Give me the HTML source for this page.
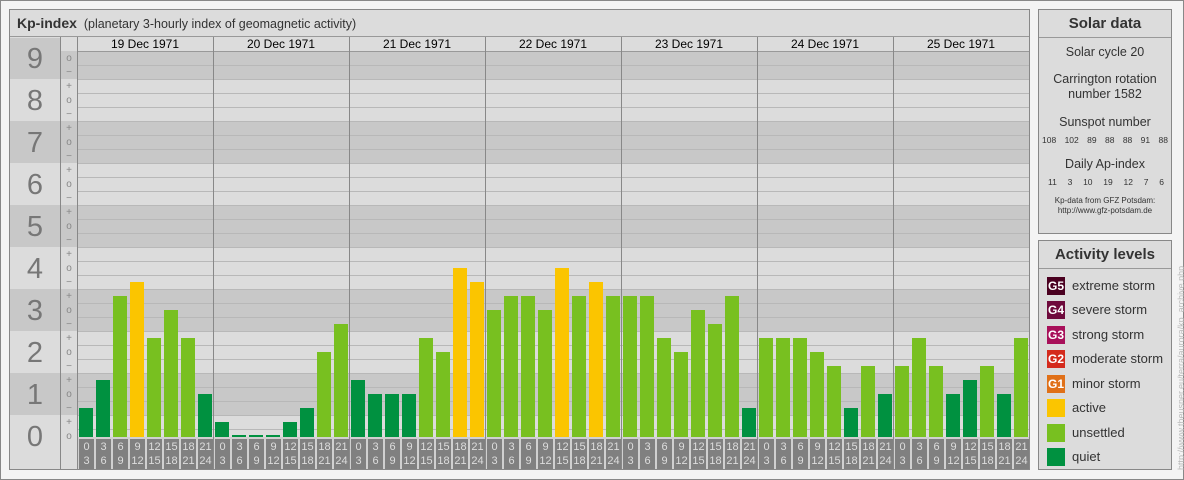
<!DOCTYPE html><html><head><meta charset="utf-8"><style>
*{margin:0;padding:0;box-sizing:border-box}
body{width:1184px;height:480px;background:#fff;font-family:"Liberation Sans",sans-serif;position:relative;overflow:hidden}
.a{position:absolute}
#frame{left:0;top:0;width:1184px;height:480px;border:1px solid #888;background:#f4f4f4}
#main{left:9px;top:9px;width:1021px;height:461px;border:1px solid #888;background:#dcdcdc}
.band{position:absolute;left:10px;width:1019px;height:42px}
.d{background:#c8c8c8}.l{background:#dcdcdc}
.gl{position:absolute;left:77px;width:952px;height:1px;background:#b8b8b8}
.num{position:absolute;left:10px;width:50px;height:42px;text-align:center;font-size:29px;color:#777;line-height:42px}
.sg{position:absolute;left:61px;width:16px;font-size:10px;color:#888;text-align:center;line-height:14px;height:14px}
.vl{position:absolute;top:37px;width:1px;height:432px;background:#888}
.dh{position:absolute;top:37px;width:136px;height:14px;font-size:12px;text-align:center;line-height:14px;color:#000}
.b{position:absolute;width:14px}
.q{background:#009140}.u{background:#78c020}.y{background:#fbc500}
.hl{position:absolute;top:439px;width:15px;height:30px;background:#808080;color:#ddd;font-size:11px;text-align:center;line-height:14px;padding-top:1px}
.box{position:absolute;left:1038px;width:134px;border:1px solid #888;background:#dcdcdc}
.bt{height:28px;border-bottom:1px solid #999;text-align:center;font-weight:bold;font-size:15px;line-height:28px;color:#333}
.st{text-align:center;color:#333;font-size:12.5px}
.row{display:flex;justify-content:space-between;font-size:8.5px;color:#333;padding:0 3px;white-space:nowrap}
.lg{position:absolute;left:8px;width:18px;height:18px;color:#fff;font-size:12px;font-weight:bold;line-height:18px;text-align:center}
.lt{position:absolute;left:33px;font-size:13px;color:#333;line-height:18px}
</style></head><body>
<div class="a" id="frame"></div>
<div class="a" id="main"></div>
<div class="a" style="left:10px;top:10px;width:1019px;height:27px;border-bottom:1px solid #999;font-size:12.5px;line-height:26px;color:#333;padding-left:7px"><b style="font-size:14px">Kp-index</b>&nbsp;&nbsp;(planetary 3-hourly index of geomagnetic activity)</div>
<div class="band d" style="top:38px;height:41px"></div>
<div class="band l" style="top:79px"></div>
<div class="band d" style="top:121px"></div>
<div class="band l" style="top:163px"></div>
<div class="band d" style="top:205px"></div>
<div class="band l" style="top:247px"></div>
<div class="band d" style="top:289px"></div>
<div class="band l" style="top:331px"></div>
<div class="band d" style="top:373px"></div>
<div class="band l" style="top:415px;height:54px"></div>
<div class="a" style="left:77px;top:38px;width:952px;height:13px;background:#dcdcdc"></div>
<div class="a" style="left:61px;top:38px;width:16px;height:13px;background:#dcdcdc"></div>
<div class="a" style="left:60px;top:37px;width:1px;height:432px;background:#888"></div>
<div class="a" style="left:77px;top:51px;width:952px;height:1px;background:#999"></div>
<div class="gl" style="top:65px"></div><div class="gl" style="top:79px"></div><div class="gl" style="top:93px"></div><div class="gl" style="top:107px"></div><div class="gl" style="top:121px"></div><div class="gl" style="top:135px"></div><div class="gl" style="top:149px"></div><div class="gl" style="top:163px"></div><div class="gl" style="top:177px"></div><div class="gl" style="top:191px"></div><div class="gl" style="top:205px"></div><div class="gl" style="top:219px"></div><div class="gl" style="top:233px"></div><div class="gl" style="top:247px"></div><div class="gl" style="top:261px"></div><div class="gl" style="top:275px"></div><div class="gl" style="top:289px"></div><div class="gl" style="top:303px"></div><div class="gl" style="top:317px"></div><div class="gl" style="top:331px"></div><div class="gl" style="top:345px"></div><div class="gl" style="top:359px"></div><div class="gl" style="top:373px"></div><div class="gl" style="top:387px"></div><div class="gl" style="top:401px"></div><div class="gl" style="top:415px"></div><div class="gl" style="top:429px"></div>
<div class="num" style="top:38px">9</div><div class="num" style="top:80px">8</div><div class="num" style="top:122px">7</div><div class="num" style="top:164px">6</div><div class="num" style="top:206px">5</div><div class="num" style="top:248px">4</div><div class="num" style="top:290px">3</div><div class="num" style="top:332px">2</div><div class="num" style="top:374px">1</div><div class="num" style="top:416px">0</div>
<div class="sg" style="top:52px">o</div><div class="sg" style="top:66px">−</div>
<div class="sg" style="top:80px">+</div><div class="sg" style="top:94px">o</div><div class="sg" style="top:108px">−</div>
<div class="sg" style="top:122px">+</div><div class="sg" style="top:136px">o</div><div class="sg" style="top:150px">−</div>
<div class="sg" style="top:164px">+</div><div class="sg" style="top:178px">o</div><div class="sg" style="top:192px">−</div>
<div class="sg" style="top:206px">+</div><div class="sg" style="top:220px">o</div><div class="sg" style="top:234px">−</div>
<div class="sg" style="top:248px">+</div><div class="sg" style="top:262px">o</div><div class="sg" style="top:276px">−</div>
<div class="sg" style="top:290px">+</div><div class="sg" style="top:304px">o</div><div class="sg" style="top:318px">−</div>
<div class="sg" style="top:332px">+</div><div class="sg" style="top:346px">o</div><div class="sg" style="top:360px">−</div>
<div class="sg" style="top:374px">+</div><div class="sg" style="top:388px">o</div><div class="sg" style="top:402px">−</div>
<div class="sg" style="top:416px">+</div><div class="sg" style="top:430px">o</div>
<div class="vl" style="left:77px"></div><div class="vl" style="left:213px"></div><div class="vl" style="left:349px"></div><div class="vl" style="left:485px"></div><div class="vl" style="left:621px"></div><div class="vl" style="left:757px"></div><div class="vl" style="left:893px"></div>
<div class="dh" style="left:77px">19 Dec 1971</div><div class="dh" style="left:213px">20 Dec 1971</div><div class="dh" style="left:349px">21 Dec 1971</div><div class="dh" style="left:485px">22 Dec 1971</div><div class="dh" style="left:621px">23 Dec 1971</div><div class="dh" style="left:757px">24 Dec 1971</div><div class="dh" style="left:893px">25 Dec 1971</div>
<div class="b q" style="left:79px;top:408px;height:29px"></div><div class="b q" style="left:96px;top:380px;height:57px"></div><div class="b u" style="left:113px;top:296px;height:141px"></div><div class="b y" style="left:130px;top:282px;height:155px"></div><div class="b u" style="left:147px;top:338px;height:99px"></div><div class="b u" style="left:164px;top:310px;height:127px"></div><div class="b u" style="left:181px;top:338px;height:99px"></div><div class="b q" style="left:198px;top:394px;height:43px"></div>
<div class="b q" style="left:215px;top:422px;height:15px"></div><div class="b q" style="left:232px;top:435px;height:2px"></div><div class="b q" style="left:249px;top:435px;height:2px"></div><div class="b q" style="left:266px;top:435px;height:2px"></div><div class="b q" style="left:283px;top:422px;height:15px"></div><div class="b q" style="left:300px;top:408px;height:29px"></div><div class="b u" style="left:317px;top:352px;height:85px"></div><div class="b u" style="left:334px;top:324px;height:113px"></div>
<div class="b q" style="left:351px;top:380px;height:57px"></div><div class="b q" style="left:368px;top:394px;height:43px"></div><div class="b q" style="left:385px;top:394px;height:43px"></div><div class="b q" style="left:402px;top:394px;height:43px"></div><div class="b u" style="left:419px;top:338px;height:99px"></div><div class="b u" style="left:436px;top:352px;height:85px"></div><div class="b y" style="left:453px;top:268px;height:169px"></div><div class="b y" style="left:470px;top:282px;height:155px"></div>
<div class="b u" style="left:487px;top:310px;height:127px"></div><div class="b u" style="left:504px;top:296px;height:141px"></div><div class="b u" style="left:521px;top:296px;height:141px"></div><div class="b u" style="left:538px;top:310px;height:127px"></div><div class="b y" style="left:555px;top:268px;height:169px"></div><div class="b u" style="left:572px;top:296px;height:141px"></div><div class="b y" style="left:589px;top:282px;height:155px"></div><div class="b u" style="left:606px;top:296px;height:141px"></div>
<div class="b u" style="left:623px;top:296px;height:141px"></div><div class="b u" style="left:640px;top:296px;height:141px"></div><div class="b u" style="left:657px;top:338px;height:99px"></div><div class="b u" style="left:674px;top:352px;height:85px"></div><div class="b u" style="left:691px;top:310px;height:127px"></div><div class="b u" style="left:708px;top:324px;height:113px"></div><div class="b u" style="left:725px;top:296px;height:141px"></div><div class="b q" style="left:742px;top:408px;height:29px"></div>
<div class="b u" style="left:759px;top:338px;height:99px"></div><div class="b u" style="left:776px;top:338px;height:99px"></div><div class="b u" style="left:793px;top:338px;height:99px"></div><div class="b u" style="left:810px;top:352px;height:85px"></div><div class="b u" style="left:827px;top:366px;height:71px"></div><div class="b q" style="left:844px;top:408px;height:29px"></div><div class="b u" style="left:861px;top:366px;height:71px"></div><div class="b q" style="left:878px;top:394px;height:43px"></div>
<div class="b u" style="left:895px;top:366px;height:71px"></div><div class="b u" style="left:912px;top:338px;height:99px"></div><div class="b u" style="left:929px;top:366px;height:71px"></div><div class="b q" style="left:946px;top:394px;height:43px"></div><div class="b q" style="left:963px;top:380px;height:57px"></div><div class="b u" style="left:980px;top:366px;height:71px"></div><div class="b q" style="left:997px;top:394px;height:43px"></div><div class="b u" style="left:1014px;top:338px;height:99px"></div>
<div class="a" style="left:77px;top:437px;width:952px;height:32px;background:#d0d0d0"></div>
<div class="hl" style="left:79px">0<br>3</div><div class="hl" style="left:96px">3<br>6</div><div class="hl" style="left:113px">6<br>9</div><div class="hl" style="left:130px">9<br>12</div><div class="hl" style="left:147px">12<br>15</div><div class="hl" style="left:164px">15<br>18</div><div class="hl" style="left:181px">18<br>21</div><div class="hl" style="left:198px">21<br>24</div>
<div class="hl" style="left:215px">0<br>3</div><div class="hl" style="left:232px">3<br>6</div><div class="hl" style="left:249px">6<br>9</div><div class="hl" style="left:266px">9<br>12</div><div class="hl" style="left:283px">12<br>15</div><div class="hl" style="left:300px">15<br>18</div><div class="hl" style="left:317px">18<br>21</div><div class="hl" style="left:334px">21<br>24</div>
<div class="hl" style="left:351px">0<br>3</div><div class="hl" style="left:368px">3<br>6</div><div class="hl" style="left:385px">6<br>9</div><div class="hl" style="left:402px">9<br>12</div><div class="hl" style="left:419px">12<br>15</div><div class="hl" style="left:436px">15<br>18</div><div class="hl" style="left:453px">18<br>21</div><div class="hl" style="left:470px">21<br>24</div>
<div class="hl" style="left:487px">0<br>3</div><div class="hl" style="left:504px">3<br>6</div><div class="hl" style="left:521px">6<br>9</div><div class="hl" style="left:538px">9<br>12</div><div class="hl" style="left:555px">12<br>15</div><div class="hl" style="left:572px">15<br>18</div><div class="hl" style="left:589px">18<br>21</div><div class="hl" style="left:606px">21<br>24</div>
<div class="hl" style="left:623px">0<br>3</div><div class="hl" style="left:640px">3<br>6</div><div class="hl" style="left:657px">6<br>9</div><div class="hl" style="left:674px">9<br>12</div><div class="hl" style="left:691px">12<br>15</div><div class="hl" style="left:708px">15<br>18</div><div class="hl" style="left:725px">18<br>21</div><div class="hl" style="left:742px">21<br>24</div>
<div class="hl" style="left:759px">0<br>3</div><div class="hl" style="left:776px">3<br>6</div><div class="hl" style="left:793px">6<br>9</div><div class="hl" style="left:810px">9<br>12</div><div class="hl" style="left:827px">12<br>15</div><div class="hl" style="left:844px">15<br>18</div><div class="hl" style="left:861px">18<br>21</div><div class="hl" style="left:878px">21<br>24</div>
<div class="hl" style="left:895px">0<br>3</div><div class="hl" style="left:912px">3<br>6</div><div class="hl" style="left:929px">6<br>9</div><div class="hl" style="left:946px">9<br>12</div><div class="hl" style="left:963px">12<br>15</div><div class="hl" style="left:980px">15<br>18</div><div class="hl" style="left:997px">18<br>21</div><div class="hl" style="left:1014px">21<br>24</div>
<div class="vl" style="left:77px"></div><div class="vl" style="left:213px"></div><div class="vl" style="left:349px"></div><div class="vl" style="left:485px"></div><div class="vl" style="left:621px"></div><div class="vl" style="left:757px"></div><div class="vl" style="left:893px"></div>
<div class="box" style="top:9px;height:225px">
<div class="bt">Solar data</div>
<div class="st" style="margin-top:7px">Solar cycle 20</div>
<div class="st" style="margin-top:13px;line-height:15px">Carrington rotation<br>number 1582</div>
<div class="st" style="margin-top:13px">Sunspot number</div>
<div class="row" style="margin-top:6px"><span>108</span><span>102</span><span>89</span><span>88</span><span>88</span><span>91</span><span>88</span></div>
<div class="st" style="margin-top:12px">Daily Ap-index</div>
<div class="row" style="margin-top:6px;padding:0 7px 0 9px"><span>11</span><span>3</span><span>10</span><span>19</span><span>12</span><span>7</span><span>6</span></div>
<div class="st" style="font-size:8px;margin-top:9px;line-height:10px">Kp-data from GFZ Potsdam:<br>http://www.gfz-potsdam.de</div>
</div>
<div class="box" style="top:240px;height:230px">
<div class="bt">Activity levels</div>
<div class="lg" style="top:36px;background:#4a0020">G5</div><div class="lt" style="top:36px">extreme storm</div>
<div class="lg" style="top:60px;background:#6e0a3c">G4</div><div class="lt" style="top:60px">severe storm</div>
<div class="lg" style="top:85px;background:#a8105a">G3</div><div class="lt" style="top:85px">strong storm</div>
<div class="lg" style="top:109px;background:#d42a1c">G2</div><div class="lt" style="top:109px">moderate storm</div>
<div class="lg" style="top:134px;background:#e07018">G1</div><div class="lt" style="top:134px">minor storm</div>
<div class="lg" style="top:158px;background:#fbc500"></div><div class="lt" style="top:158px">active</div>
<div class="lg" style="top:183px;background:#78c020"></div><div class="lt" style="top:183px">unsettled</div>
<div class="lg" style="top:207px;background:#009140"></div><div class="lt" style="top:207px">quiet</div>
</div>
<div class="a" style="left:1176px;top:470px;transform:rotate(-90deg);transform-origin:0 0;font-size:9px;color:#bbb;white-space:nowrap;width:240px">http://www.theusner.eu/terra/aurora/kp_archive.php</div>
</body></html>
